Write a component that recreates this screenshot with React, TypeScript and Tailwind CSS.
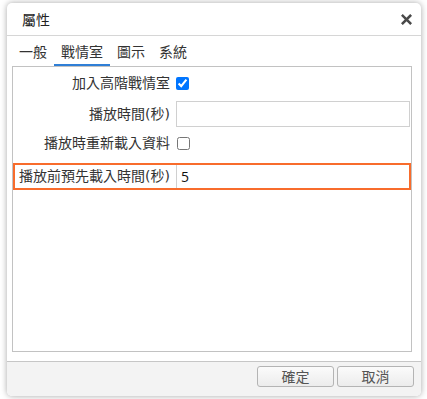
import { useState } from "react";

const tabs = ["一般", "戰情室", "圖示", "系統"];

function CloseIcon() {
  return (
    <svg width="11" height="11" viewBox="0 0 11 11" className="text-[#4a4a4a]">
      <path
        d="M1.8 1.8 L9.2 9.2 M9.2 1.8 L1.8 9.2"
        stroke="currentColor"
        strokeWidth="2.6"
        strokeLinecap="square"
      />
    </svg>
  );
}

const labelFont = { fontFamily: '"DejaVu Sans", "Noto Sans CJK TC", sans-serif' };

export default function App() {
  const [activeTab, setActiveTab] = useState(1);

  return (
    <div
      className="w-[427px] h-[399px] bg-white pt-[3px] pl-[7px]"
      style={{ fontFamily: '"Open Sans", "Noto Sans CJK TC", sans-serif' }}
    >
      <div className="w-[414px] h-[393px] bg-white rounded-[5px] shadow-[0_0_6px_rgba(0,0,0,0.35)] flex flex-col overflow-hidden text-[14px] text-[#333]">
        {/* header */}
        <div className="h-[33px] flex items-center justify-between pl-[15px] pr-[9px] border-b border-[#d6d6d6]">
          <span className="text-[#222]">屬性</span>
          <CloseIcon />
        </div>

        {/* tabs */}
        <div className="flex h-[30px] pl-[5px] items-end">
          {tabs.map((t, i) => (
            <button
              key={t}
              onClick={() => setActiveTab(i)}
              className={
                "px-[7px] h-full flex items-center pt-[2px] border-b-2 " +
                (i === activeTab ? "border-[#2f7fd6]" : "border-transparent")
              }
            >
              {t}
            </button>
          ))}
        </div>

        {/* content */}
        <div className="ml-[5px] mr-[9px] h-[286px] border border-[#c2c2c2] flex flex-col" style={labelFont}>
          <div className="flex items-center h-[32px]">
            <div className="w-[163px] text-right pr-[6px]">加入高階戰情室</div>
            <input type="checkbox" defaultChecked className="w-[13px] h-[13px]" />
          </div>
          <div className="flex items-center h-[30px]">
            <div className="w-[163px] text-right pr-[6px]">播放時間(秒)</div>
            <input
              type="text"
              className="w-[234px] h-[26px] border border-[#d0d0d0] px-[4px] outline-none"
            />
          </div>
          <div className="flex items-center h-[28px]">
            <div className="w-[163px] text-right pr-[6px]">播放時重新載入資料</div>
            <input type="checkbox" className="w-[13px] h-[13px] ml-[1px]" />
          </div>
          <div className="flex items-stretch h-[27px] mt-[6px] border-2 border-[#f86c2c]">
            <div className="w-[161px] text-right pr-[6px] flex items-center justify-end whitespace-nowrap">
              播放前預先載入時間(秒)
            </div>
            <input
              type="text"
              defaultValue="5"
              className="flex-1 border-l border-[#d0d0d0] px-[4px] outline-none text-[#111]"
              style={{ fontFamily: '"Open Sans", sans-serif' }}
            />
          </div>
        </div>

        {/* footer */}
        <div className="mt-[9px] flex-1 bg-[#f3f3f3] border-t border-[#c6c6c6] flex justify-end items-start pt-[4px] pr-[7px] gap-[3px]">
          {["確定", "取消"].map((b) => (
            <button
              key={b}
              className="w-[77px] h-[21px] rounded-[3px] border border-[#b4b4b4] bg-gradient-to-b from-[#fbfbfb] to-[#ececec] text-[#555] text-[14px] leading-none"
            >
              {b}
            </button>
          ))}
        </div>
      </div>
    </div>
  );
}
